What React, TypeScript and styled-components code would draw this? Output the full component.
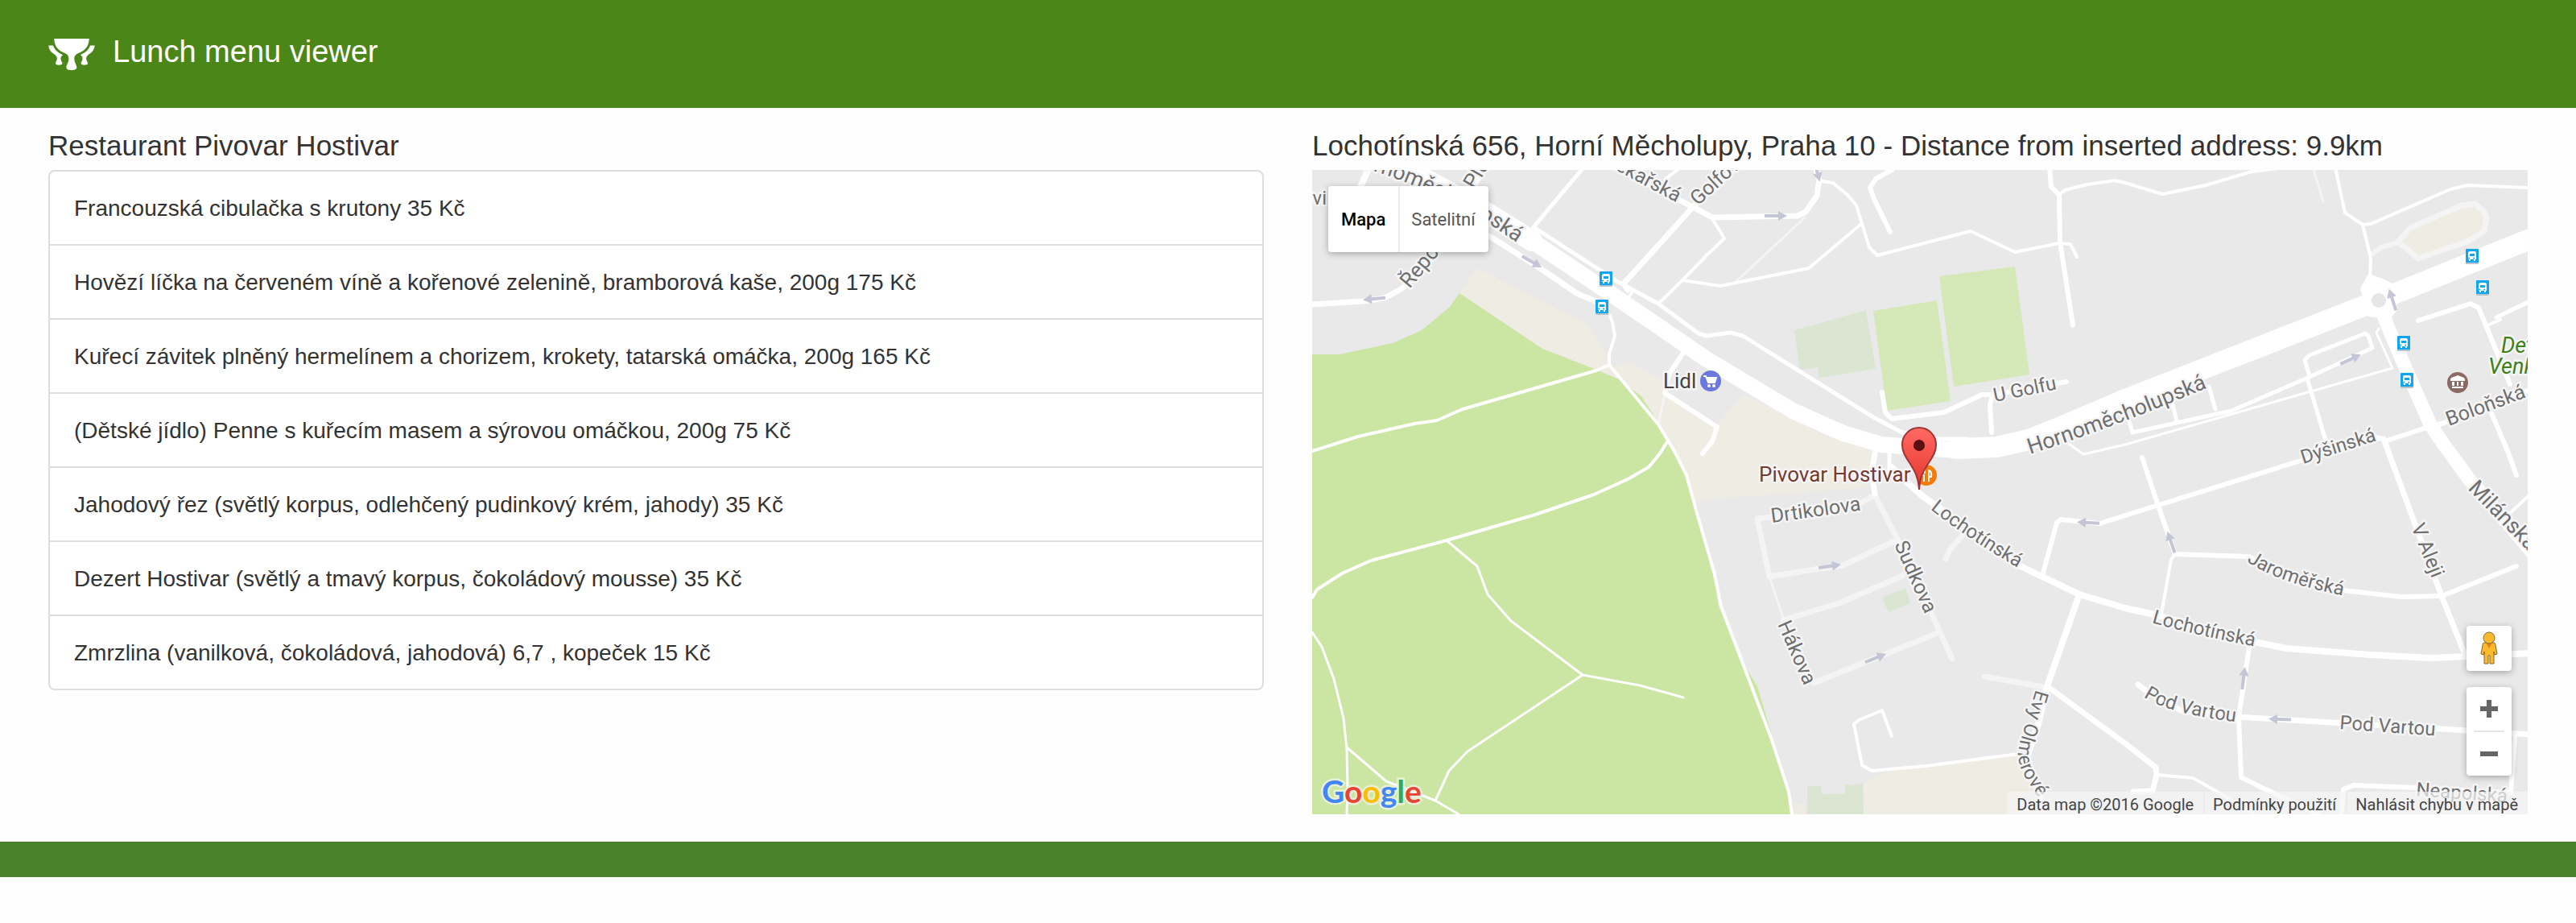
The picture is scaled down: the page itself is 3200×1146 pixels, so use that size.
import React from "react";
import styled, { createGlobalStyle, css } from "styled-components";

const GlobalStyle = createGlobalStyle`
  *, *::before, *::after { box-sizing: border-box; }
  body {
    margin: 0;
    background: #fefefe;
    color: #333;
    font-family: "Liberation Sans", Arial, sans-serif;
    font-size: 28px;
    line-height: 40px;
  }
`;

const Header = styled.header`
  display: flex;
  align-items: center;
  gap: 22px;
  height: 134px;
  padding: 0 60px 6px;
  background: #4b8619;
  color: #fff;
`;

const Brand = styled.h1`
  margin: 0;
  font-size: 38px;
  line-height: 44px;
  font-weight: 400;
`;

const Columns = styled.main`
  display: grid;
  grid-template-columns: 1fr 1fr;
  column-gap: 60px;
  align-items: start;
  padding: 27px 60px 34px;
`;

const Column = styled.section`
  min-width: 0;
`;

const Heading = styled.h2`
  margin: 0 0 10px;
  font-size: 35px;
  line-height: 40px;
  font-weight: 400;
`;

const MenuList = styled.ul`
  margin: 0;
  padding: 0;
  list-style: none;
  border: 2px solid #ddd;
  border-radius: 8px;
  background: #fff;
`;

const MenuItem = styled.li`
  padding: 26px 30px 24px;

  & + & {
    border-top: 2px solid #ddd;
  }
`;

const Footer = styled.footer`
  height: 44px;
  background: #4a812b;
`;

const MapFrame = styled.div`
  position: relative;
  height: 800px;
  overflow: hidden;
  background: #e9e9e9;
  font-family: Roboto, "Noto Sans", sans-serif;
`;

const MapCanvas = styled.svg`
  display: block;
  width: 100%;
  height: 100%;
`;

const Road = styled.path<{ $w: number; $faint?: boolean }>`
  fill: none;
  stroke: ${(p) => (p.$faint ? "#f4f4f4" : "#fff")};
  stroke-width: ${(p) => p.$w}px;
  stroke-linecap: round;
  stroke-linejoin: round;
`;

const Area = styled.polygon<{ $fill: string }>`
  fill: ${(p) => p.$fill};
`;

const MapText = styled.text<{ $size?: number; $color?: string; $italic?: boolean }>`
  font-size: ${(p) => p.$size ?? 24}px;
  font-style: ${(p) => (p.$italic ? "italic" : "normal")};
  fill: ${(p) => p.$color ?? "#6f6f6f"};
  stroke: #f5f5f5;
  stroke-width: 5px;
  stroke-linejoin: round;
  paint-order: stroke;
`;

const panel = css`
  background: #fff;
  border-radius: 4px;
  box-shadow: 0 2px 8px rgba(0, 0, 0, 0.3);
`;

const TypeSwitch = styled.div`
  ${panel}
  position: absolute;
  top: 20px;
  left: 20px;
  display: flex;
  height: 82px;
`;

const TypeButton = styled.button<{ $active?: boolean }>`
  padding: 0 16px;
  border: 0;
  background: none;
  font-family: inherit;
  font-size: 22px;
  font-weight: ${(p) => (p.$active ? 500 : 400)};
  color: ${(p) => (p.$active ? "#000" : "#565656")};

  & + & {
    box-shadow: inset 2px 0 0 #ebebeb;
  }
`;

const CornerControls = styled.div`
  position: absolute;
  right: 20px;
  bottom: 48px;
  display: flex;
  flex-direction: column;
  gap: 20px;
`;

const ControlPanel = styled.div`
  ${panel}
  display: flex;
  flex-direction: column;
  align-items: center;
  width: 56px;
`;

const IconButton = styled.button`
  display: flex;
  align-items: center;
  justify-content: center;
  width: 56px;
  height: 56px;
  padding: 0;
  border: 0;
  background: none;
`;

const ZoomButton = styled(IconButton)`
  height: 54px;
`;

const Divider = styled.div`
  width: 38px;
  height: 2px;
  background: #e6e6e6;
`;

const Attribution = styled.div`
  position: absolute;
  right: 0;
  bottom: 0;
  display: flex;
  height: 28px;
  background: rgba(245, 245, 245, 0.7);
  font-size: 20px;
  line-height: 32px;
  color: #444;
`;

const AttributionItem = styled.span`
  padding: 0 12px;

  & + & {
    box-shadow: inset 2px 0 0 #ececec;
  }

  a {
    color: inherit;
    text-decoration: none;
  }
`;

const GoogleLink = styled.a`
  position: absolute;
  left: 12px;
  bottom: 3px;
  font-family: Lato, sans-serif;
  font-size: 39px;
  font-weight: 700;
  line-height: 52px;
  text-decoration: none;
  -webkit-text-stroke: 5px rgba(240, 244, 228, 0.8);
  paint-order: stroke;
`;

const Letter = styled.span<{ $color: string }>`
  color: ${(p) => p.$color};
`;

const MENU = [
  "Francouzská cibulačka s krutony 35 Kč",
  "Hovězí líčka na červeném víně a kořenové zelenině, bramborová kaše, 200g 175 Kč",
  "Kuřecí závitek plněný hermelínem a chorizem, krokety, tatarská omáčka, 200g 165 Kč",
  "(Dětské jídlo) Penne s kuřecím masem a sýrovou omáčkou, 200g 75 Kč",
  "Jahodový řez (světlý korpus, odlehčený pudinkový krém, jahody) 35 Kč",
  "Dezert Hostivar (světlý a tmavý korpus, čokoládový mousse) 35 Kč",
  "Zmrzlina (vanilková, čokoládová, jahodová) 6,7 , kopeček 15 Kč",
];

const SAND = "#efece3";
const PARK = "#cae6a2";
const PITCH = "#d5e8b8";
const LAWN = "#dae6d2";

const AREAS: [string, string][] = [
  [SAND, "1813,364 1835,333 1973,403 1993,437 2003,455 2011,471 1983,459 1916,433"],
  [SAND, "2003,455 2023,450 2067,473 2070,490 2132,528 2167,490 2250,530 2330,557 2320,605 2230,612 2120,620 2107,623 2095,592 2070,547 2039,492 2011,471"],
  [PARK, "1630,440 1664,440 1730,426 1766,410 1801,381 1813,364 1916,433 1983,459 2011,471 2039,492 2060,525 2070,547 2095,592 2108,637 2130,722 2135,752 2162,818 2183,852 2215,960 2226,1011 1630,1011"],
  [SAND, "2315,973 2350,956 2393,951 2507,936 2527,980 2535,1011 2315,1011"],
  [SAND, "2228,998 2243,998 2243,1011 2228,1011"],
  [LAWN, "2245,976 2262,976 2263,986 2292,985 2292,975 2314,973 2315,1011 2245,1011"],
  [LAWN, "2338,742 2367,730 2373,749 2346,760"],
  [LAWN, "2229,410 2318,385 2330,458 2260,469 2258,456 2236,459"],
  [PITCH, "2327,386 2406,373 2423,498 2344,510"],
  [PITCH, "2409,343 2503,331 2521,465 2427,480"],
];

const FAINT_ROADS: [number, string][] = [
  [3, "M2153 353L2242 270"],
  [3, "M2874 211L2886 250"],
  [6, "M2947 315L2958 307L2976 302"],
  [7, "M2329 615L2300 630L2183 644L2198 716L2260 706L2287 703L2353 672"],
  [7, "M2329 615L2357 669L2425 818"],
  [3, "M2198 716L2215 767"],
  [7, "M2215 770L2287 748L2363 715"],
  [7, "M2253 848L2407 786"],
  [7, "M2417 694L2423 681L2437 666"],
  [7, "M2465 840L2540 853"],
  [3, "M2060 527L2068 490"],
];

const ROADS: [number, string][] = [
  [4, "M1999 453L1983 460L1817 508L1785 522L1757 526L1687 542L1630 560"],
  [4, "M2072 547L2062 563L2048 580L2022 595L1980 614L1907 639L1797 671L1703 696L1667 712L1636 732L1630 742"],
  [3, "M1797 671L1835 703L1848 738L1877 771L1966 838L2037 851L2091 866"],
  [3, "M1966 838L1823 933L1800 957L1783 994"],
  [3, "M1630 785L1642 803L1657 843L1669 892L1673 930L1674 980L1673 1011"],
  [3, "M1673 928L1722 970L1783 994L1812 1011"],
  [4, "M2000 392L2003 400L2006 417L1999 440L1999 453L2060 527L2072 547L2080 560L2095 590L2108 637L2130 713L2138 753L2162 816L2200 916L2222 983L2226 1011"],
  [6, "M2093 435L2073 465L2068 488L2133 530L2127 548L2115 563"],
  [7, "M1630 378L1693 374L1720 370L1742 358L1787 313L1827 237L1850 200"],
  [8, "M1702 205L1690 232"],
  [5, "M1967 208L1905 282L2010 350L2060 377L2110 414L2120 417L2150 413L2165 417L2327 518L2363 537L2400 545L2443 545"],
  [7, "M2005 207L2103 257L2127 270L2233 268L2243 263L2257 243L2260 223L2255 208"],
  [7, "M2160 205L2103 257L2017 352L2022 360"],
  [4, "M2068 223L2087 208"],
  [4, "M2128 273L2142 296L2120 317L2090 348L2060 377"],
  [4, "M2090 348L2137 355L2247 333L2312 278"],
  [4, "M2263 225L2277 227L2295 242L2306 255L2322 307L2332 317L2448 287L2503 313L2558 302L2572 303L2580 319"],
  [6, "M2350 211L2330 222L2323 233L2328 247L2348 288"],
  [6, "M2546 208L2548 232L2558 242L2559 300L2575 404"],
  [4, "M2558 242L2565 236L2593 229L2627 224L2640 227L2686 241L2740 230L2797 213L2830 209"],
  [4, "M2901 208L2913 264L2935 279L2945 320L2944 350"],
  [4, "M2935 279L2945 278L3044 235L3065 230L3140 233"],
  [26, "M1700 164L1720 195L1850 266L1903 299"],
  [20, "M1903 299L1997 362L2120 446L2227 510L2290 538L2337 552L2430 559"],
  [7, "M1850 293L1913 333L1960 365L1985 375"],
  [4, "M2022 371L2028 362"],
  [26, "M2430 557L2480 555L2520 546L2560 530L2640 496L2783 440L2954 373L3140 298"],
  [17, "M2954 373L2966 405L2983 445L3019 527L3033 548L3068 596L3104 637L3145 685"],
  [6, "M3004 398L3069 377L3079 382L3118 477"],
  [6, "M3095 513L3115 560L3126 590"],
  [4, "M3092 403L3106 397"],
  [5, "M3101 394L3145 373"],
  [6, "M2965 547L3011 532L3036 525L3145 483"],
  [5, "M2869 467L2863 447L2869 441L2938 414L2942 417L2947 432L2869 468L2772 510L2649 537L2645 523"],
  [5, "M2744 480L2752 508"],
  [5, "M2699 503L2704 523"],
  [3, "M2570 551L2588 564L2640 552L2972 457L2952 413L2955 408"],
  [5, "M2867 473L2890 550"],
  [6, "M2338 487L2342 512L2350 520L2415 512L2462 490L2477 490L2567 474"],
  [6, "M2474 495L2472 502L2474 537"],
  [7, "M2330 557L2325 588L2329 613"],
  [5, "M2347 561L2347 590"],
  [8, "M2350 580L2367 597L2387 615L2510 703L2537 716L2583 738L2640 755L2676 763L2801 797L2840 805L2944 813L3019 817L3065 815L3145 811"],
  [8, "M2583 738L2543 852L2532 899L2518 940L2535 990"],
  [7, "M2543 852L2640 923L2678 953L2679 962L2674 982L2650 983"],
  [4, "M2679 962L2724 966L2758 985L2800 1011"],
  [6, "M2537 715L2555 649L2560 645L2608 650L2640 640L2858 572L2951 543L2961 545"],
  [7, "M2961 545L3033 740L3063 815"],
  [6, "M2661 568L2681 628L2702 688L2794 691L2851 723L2911 733L2983 741L3033 740L3126 703"],
  [4, "M2702 688L2697 695L2685 762"],
  [7, "M2656 850L2669 860L2711 883L2779 890L3065 907L3145 912"],
  [6, "M2794 803L2781 890L2784 965L2808 977L2880 1011"],
  [6, "M2908 1015L2911 980L2924 975L3001 978L3119 984L3124 912"],
  [4, "M3118 637L3145 612"],
  [4, "M2350 914L2338 882L2309 894L2303 899L2313 950L2325 957L2393 951L2507 936"],
];

const LABELS: { d: string; text: string; size?: number }[] = [
  { text: "Hornoměcholupská", size: 27, d: "M2522 564Q2640 526 2780 465" },
  { text: "Hornoměcholupská", size: 27, d: "M1672 203Q1760 224 1850 278L1930 332" },
  { text: "Řeporyjská", size: 26, d: "M1751 359L1850 240" },
  { text: "Pluk", size: 26, d: "M1832 236L1860 188" },
  { text: "ovi", d: "M1617 254L1700 254" },
  { text: "Lékařská", size: 25, d: "M1994 204L2110 266" },
  { text: "Golfova", size: 25, d: "M2109 256L2190 182" },
  { text: "Drtikolova", size: 25, d: "M2201 649L2330 631" },
  { text: "Sudkova", size: 25, d: "M2353 676L2400 782" },
  { text: "Hákova", size: 25, d: "M2208 775L2253 878" },
  { text: "Lochotínská", d: "M2398 632Q2450 674 2540 724" },
  { text: "Lochotínská", d: "M2673 773Q2735 791 2830 808" },
  { text: "U Golfu", d: "M2478 499L2600 474" },
  { text: "Evy Olmerové", d: "M2529 856L2510 920Q2503 943 2514 962L2550 1018" },
  { text: "Dýšinská", d: "M2861 576L2990 535" },
  { text: "Boloňská", size: 25, d: "M3042 529L3160 485" },
  { text: "Milánská", size: 27, d: "M3065 607L3158 702" },
  { text: "V Aleji", size: 25, d: "M2995 654L3034 750" },
  { text: "Jaroměřská", d: "M2791 697Q2840 730 2950 746" },
  { text: "Pod Vartou", d: "M2663 865Q2695 889 2810 900" },
  { text: "Pod Vartou", d: "M2906 905L3060 916" },
  { text: "Neapolská", d: "M3001 988L3150 999" },
];

const ARROWS: [number, number, number][] = [
  [1903, 325, 30],
  [1707, 371, 175],
  [2206, 268, 0],
  [2257, 212, 75],
  [2972, 372, -108],
  [2920, 446, -25],
  [2273, 703, -8],
  [2330, 817, -22],
  [2594, 649, 183],
  [2697, 673, -109],
  [2787, 842, -83],
  [2832, 893, 182],
];

const BUS_STOPS: [number, number][] = [
  [1995, 346],
  [1990, 381],
  [3071, 318],
  [3084, 357],
  [2986, 426],
  [2990, 472],
];

function CupsLogo() {
  return (
    <svg width="58" height="47" viewBox="33 31 176 142" fill="#fff" aria-hidden="true">
      <path d="M55 52H187C186 84 168 99 145 107C133 113 131 120 131 128C131 142 140 150 140 160C140 168 132 171 120 171C108 171 101 168 101 160C101 150 110 142 110 128C110 120 108 113 97 107C74 99 56 84 55 52Z" />
      <path d="M34 78H51C57 95 70 106 88 113C82 117 79 122 80 129C81 136 86 140 86 145C86 149 80 151 73 151C66 151 60 149 60 145C60 140 65 136 66 128C67 120 60 113 52 108C42 102 35 92 34 78Z" />
      <path d="M208 78H191C185 95 172 106 154 113C160 117 163 122 162 129C161 136 156 140 156 145C156 149 162 151 169 151C176 151 182 149 182 145C182 140 177 136 176 128C175 120 182 113 190 108C200 102 207 92 208 78Z" />
    </svg>
  );
}

function BusStop({ x, y }: { x: number; y: number }) {
  return (
    <g transform={`translate(${x} ${y})`}>
      <rect x="-8" y="-7" width="16" height="17" rx="1" fill="#b9c4ca" />
      <rect x="-8" y="-9" width="16" height="17" rx="1" fill="#0ea5f2" />
      <path fill="#fff" fillRule="evenodd" d="M-3-6H3Q5-6 5-3V4H4V6H2V4H-2V6H-4V4H-5V-3Q-5-6-3-6ZM-3-3V0H3V-3ZM-3 2A1 1 0 1 0-3 3ZM3 2A1 1 0 1 0 3 3Z" />
    </g>
  );
}

function StreetMap() {
  return (
    <MapCanvas viewBox="1630 211 1510 800" preserveAspectRatio="xMidYMid slice" role="img" aria-label="Pivovar Hostivar">
      <defs>
        <linearGradient id="pin" x1="0" y1="0" x2="0" y2="1">
          <stop offset="0" stopColor="#ff6a61" />
          <stop offset="1" stopColor="#e3342c" />
        </linearGradient>
      </defs>
      {AREAS.map(([fill, points]) => (
        <Area key={points} $fill={fill} points={points} />
      ))}
      <polygon
        points="2979,300 2994,283 3058,255 3074,253 3085,262 3089,270 3086,287 3065,300 3004,321"
        fill={SAND}
        stroke="#f4f4f4"
        strokeWidth="7"
        strokeLinejoin="round"
      />
      {FAINT_ROADS.map(([w, d]) => (
        <Road key={d} $w={w} $faint d={d} />
      ))}
      {ROADS.map(([w, d]) => (
        <Road key={d} $w={w} d={d} />
      ))}
      <polygon points="2932,358 2942,340 2960,346 2974,353 2978,385 2968,397 2942,393" fill="#fff" />
      <circle cx="2955" cy="373" r="9" fill="#e6e6e6" />
      {ARROWS.map(([x, y, a]) => (
        <path
          key={`${x}-${y}`}
          transform={`translate(${x} ${y}) rotate(${a})`}
          d="M-14-2H3V-6L14 0L3 6V2H-14Z"
          fill="#c4c6d6"
        />
      ))}
      {LABELS.map((label, i) => (
        <React.Fragment key={label.d}>
          <path id={`street-${i}`} d={label.d} fill="none" />
          <MapText $size={label.size}>
            <textPath href={`#street-${i}`}>{label.text}</textPath>
          </MapText>
        </React.Fragment>
      ))}
      {BUS_STOPS.map(([x, y]) => (
        <BusStop key={x} x={x} y={y} />
      ))}
      <MapText x="2066" y="482" $size={26} $color="#444">Lidl</MapText>
      <g transform="translate(2125 473)">
        <circle r="13" fill="#6b78dd" />
        <path d="M-9-6H-6L-3 2H5L7-4H-5" fill="#fff" stroke="#fff" strokeWidth="2" />
        <circle cx="-2" cy="6" r="2" fill="#fff" />
        <circle cx="4" cy="6" r="2" fill="#fff" />
      </g>
      <g transform="translate(3053 475)">
        <circle r="13" fill="#8a6a63" />
        <path d="M-9-4L-8-6L0-9L8-6L9-4V-2H-9ZM-7-1H-4V4H-7ZM-1-1H1V4H-1ZM4-1H7V4H4ZM-7 5H7V7H-7Z" fill="#fff" />
      </g>
      <MapText x="3107" y="438" $size={27} $color="#3f8017" $italic>Det.</MapText>
      <MapText x="3091" y="464" $size={27} $color="#3f8017" $italic>Venk</MapText>
      <MapText x="2185" y="598" $size={26} $color="#753a30">Pivovar Hostivar</MapText>
      <circle cx="2393" cy="590" r="13" fill="#f57c0c" />
      <path d="M2388 583V588Q2388 590 2390 590V598M2391 583V588M2396 583V598M2397 584Q2400 587 2399 592H2397" fill="none" stroke="#fff" strokeWidth="2" />
      <path
        d="M2384 608C2383 592 2379 585 2371 573C2366 565 2363 560 2363 552A21 21 0 0 1 2405 552C2405 560 2402 565 2397 573C2389 585 2385 592 2384 608Z"
        fill="url(#pin)"
        stroke="#9e3434"
        strokeWidth="2"
      />
      <circle cx="2384" cy="553" r="7" fill="#581010" />
    </MapCanvas>
  );
}

function Pegman() {
  return (
    <svg width="24" height="42" viewBox="0 0 24 42" aria-hidden="true">
      <path
        d="M6 14H18Q20 14 20 17L22 28L19 29L18 25V40H13V30H11V40H6V25L5 29L2 28L4 17Q4 14 6 14Z"
        fill="#fbb92c"
        stroke="#87662a"
      />
      <path d="M8 14H16L12 21Z" fill="#e8811c" />
      <circle cx="12" cy="8" r="7" fill="#fbb92c" stroke="#87662a" />
    </svg>
  );
}

export default function App() {
  return (
    <>
      <GlobalStyle />
      <Header>
        <CupsLogo />
        <Brand>Lunch menu viewer</Brand>
      </Header>
      <Columns>
        <Column>
          <Heading>Restaurant Pivovar Hostivar</Heading>
          <MenuList>
            {MENU.map((dish) => (
              <MenuItem key={dish}>{dish}</MenuItem>
            ))}
          </MenuList>
        </Column>
        <Column>
          <Heading>Lochotínská 656, Horní Měcholupy, Praha 10 - Distance from inserted address: 9.9km</Heading>
          <MapFrame>
            <StreetMap />
            <TypeSwitch>
              <TypeButton type="button" $active>Mapa</TypeButton>
              <TypeButton type="button">Satelitní</TypeButton>
            </TypeSwitch>
            <CornerControls>
              <ControlPanel>
                <IconButton type="button" aria-label="Street View">
                  <Pegman />
                </IconButton>
              </ControlPanel>
              <ControlPanel>
                <ZoomButton type="button" aria-label="+">
                  <svg width="22" height="22" viewBox="0 0 22 22" fill="#666" aria-hidden="true">
                    <path d="M8 0H14V8H22V14H14V22H8V14H0V8H8Z" />
                  </svg>
                </ZoomButton>
                <Divider />
                <ZoomButton type="button" aria-label="−">
                  <svg width="22" height="22" viewBox="0 0 22 22" fill="#666" aria-hidden="true">
                    <path d="M0 8H22V14H0Z" />
                  </svg>
                </ZoomButton>
              </ControlPanel>
            </CornerControls>
            <GoogleLink href="#google">
              <Letter $color="#4285f4">G</Letter>
              <Letter $color="#ea4335">o</Letter>
              <Letter $color="#fbbc05">o</Letter>
              <Letter $color="#4285f4">g</Letter>
              <Letter $color="#34a853">l</Letter>
              <Letter $color="#ea4335">e</Letter>
            </GoogleLink>
            <Attribution>
              <AttributionItem>Data map ©2016 Google</AttributionItem>
              <AttributionItem><a href="#terms">Podmínky použití</a></AttributionItem>
              <AttributionItem><a href="#report">Nahlásit chybu v mapě</a></AttributionItem>
            </Attribution>
          </MapFrame>
        </Column>
      </Columns>
      <Footer />
    </>
  );
}
